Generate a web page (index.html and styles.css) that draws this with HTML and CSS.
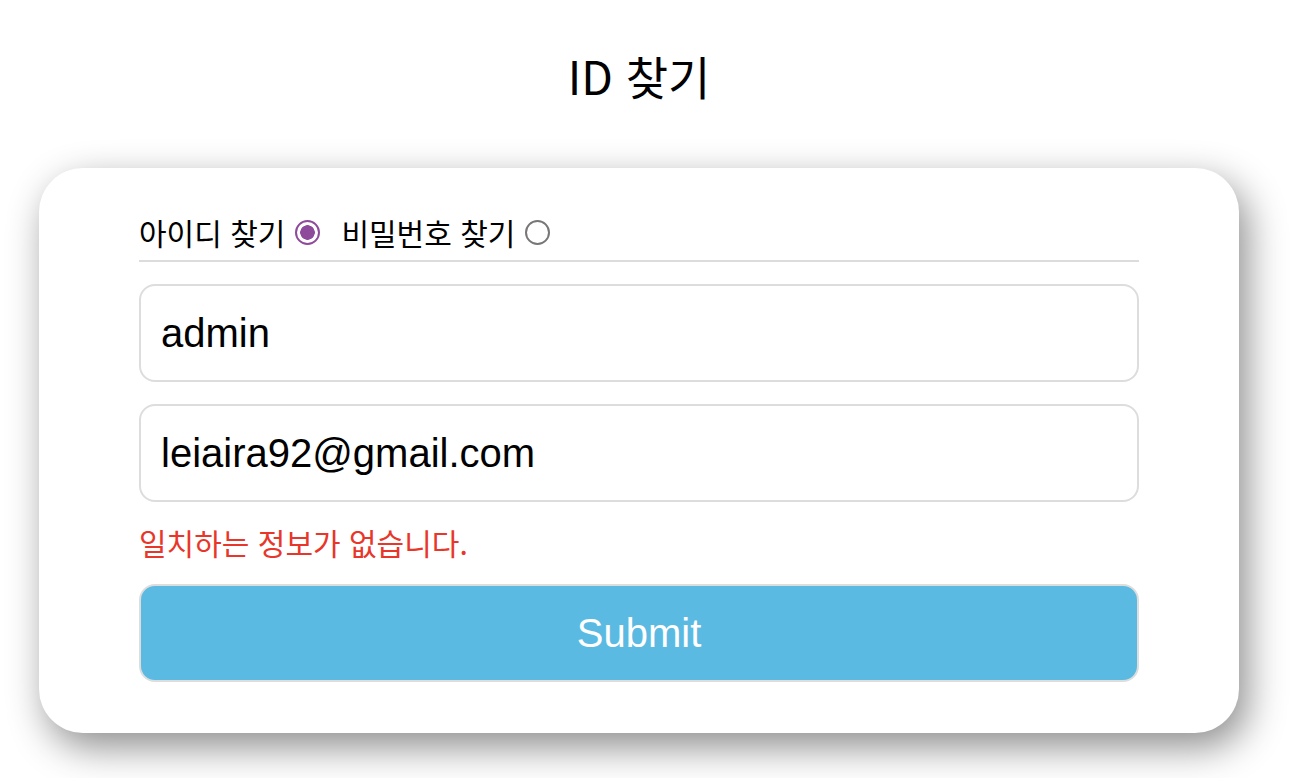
FILE: index.html
```html
<!DOCTYPE html>
<html lang="ko">
<head>
<meta charset="utf-8">
<title>ID 찾기</title>
<link rel="stylesheet" href="styles.css">
</head>
<body>
<main class="page">
  <h1 class="title">ID 찾기</h1>
  <form class="card">
    <div class="tabs">
      <label class="tab">아이디 찾기 <input type="radio" name="mode" class="radio" checked></label>
      <label class="tab">비밀번호 찾기 <input type="radio" name="mode" class="radio"></label>
    </div>
    <input class="field" type="text" value="admin">
    <input class="field" type="text" value="leiaira92@gmail.com">
    <p class="error">일치하는 정보가 없습니다.</p>
    <button class="submit" type="button">Submit</button>
  </form>
</main>
</body>
</html>
```
FILE: styles.css
```css
* { box-sizing: border-box; }
html, body { margin: 0; padding: 0; background: #fff; }
body { font-family: "Noto Sans CJK KR", "Noto Sans", sans-serif; min-height: 778px; }
.page {
  width: 1278px;
  min-height: 778px;
  display: flex;
  flex-direction: column;
  align-items: center;
}
.title {
  margin: 42px 0 0 0;
  font-size: 46px;
  font-weight: 400;
  line-height: 66px;
  text-align: center;
  color: #000;
}
.card {
  margin-top: 60px;
  width: 1200px;
  height: 565px;
  border-radius: 44px;
  background: #fff;
  box-shadow: 8px 14px 38px rgba(0,0,0,0.45);
  padding: 40px 100px 0 100px;
  display: flex;
  flex-direction: column;
}
.tabs {
  display: flex;
  align-items: center;
  gap: 21px;
  height: 54px;
  border-bottom: 2px solid #dcdcdc;
  padding-bottom: 4px;
}
.tab {
  display: flex;
  align-items: center;
  gap: 10px;
  font-size: 30px;
  color: #000;
}
.radio {
  appearance: none;
  -webkit-appearance: none;
  margin: 0;
  width: 25px;
  height: 25px;
  border-radius: 50%;
  border: 2px solid #777;
  background: #fff;
}
.radio:checked {
  border: 2px solid #8e4a9b;
  background: radial-gradient(circle, #8e4a9b 0 7px, #fff 7.5px);
}
.field {
  margin: 22px 0 0 0;
  width: 1000px;
  height: 98px;
  border: 2px solid #dddddd;
  border-radius: 16px;
  padding: 0 20px;
  font-family: "Liberation Sans", Arial, sans-serif;
  font-size: 40px;
  color: #000;
  outline: none;
}
.error {
  margin: 18px 0 0 0;
  font-size: 30px;
  line-height: 44px;
  color: #e8362a;
}
.submit {
  margin-top: 20px;
  width: 1000px;
  height: 98px;
  border: 2px solid #dddddd;
  border-radius: 16px;
  background: #5bbae2;
  color: #fff;
  font-family: "Liberation Sans", Arial, sans-serif;
  font-size: 40px;
}
```
